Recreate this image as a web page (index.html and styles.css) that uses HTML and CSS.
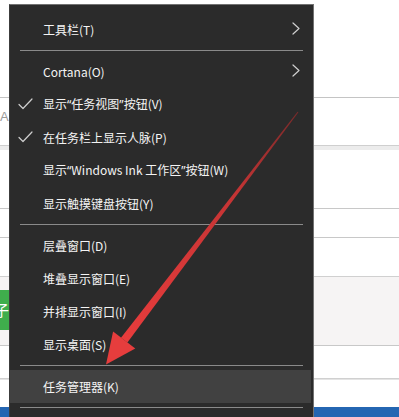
FILE: index.html
```html
<!DOCTYPE html>
<html lang="zh-CN">
<head>
<meta charset="utf-8">
<link rel="stylesheet" href="styles.css">
</head>
<body>
<div class="page">
  <div class="bg">
    <div class="row r1"></div>
    <div class="row r2"><span class="frag">A</span></div>
    <div class="row r3"></div>
    <div class="row r4"></div>
    <div class="row r5"></div>
    <div class="row r6"><div class="green">子</div></div>
    <div class="row r7"></div>
    <div class="row r8"></div>
    <div class="row r9"></div>
  </div>

  <div class="menu">
    <div class="item"><span class="ico"></span><span class="label">工具栏(T)</span><svg class="chev" width="8" height="13" viewBox="0 0 8 13"><path d="M1 1 L7 6.5 L1 12" /></svg></div>
    <div class="sep"></div>
    <div class="item"><span class="ico"></span><span class="label">Cortana(O)</span><svg class="chev" width="8" height="13" viewBox="0 0 8 13"><path d="M1 1 L7 6.5 L1 12" /></svg></div>
    <div class="item"><span class="ico"><svg class="check" width="15" height="12" viewBox="0 0 15 12"><path d="M1 6.5 L5 10.5 L14 1" /></svg></span><span class="label">显示<span class="q">“</span>任务视图<span class="q">”</span>按钮(V)</span></div>
    <div class="item"><span class="ico"><svg class="check" width="15" height="12" viewBox="0 0 15 12"><path d="M1 6.5 L5 10.5 L14 1" /></svg></span><span class="label">在任务栏上显示人脉(P)</span></div>
    <div class="item"><span class="ico"></span><span class="label">显示<span class="q">“</span>Windows Ink 工作区<span class="q">”</span>按钮(W)</span></div>
    <div class="item"><span class="ico"></span><span class="label">显示触摸键盘按钮(Y)</span></div>
    <div class="sep"></div>
    <div class="item"><span class="ico"></span><span class="label">层叠窗口(D)</span></div>
    <div class="item"><span class="ico"></span><span class="label">堆叠显示窗口(E)</span></div>
    <div class="item"><span class="ico"></span><span class="label">并排显示窗口(I)</span></div>
    <div class="item"><span class="ico"></span><span class="label">显示桌面(S)</span></div>
    <div class="sep"></div>
    <div class="item hot"><span class="ico"></span><span class="label">任务管理器(K)</span></div>
    <div class="sep"></div>
  </div>

  <svg class="arrow" width="399" height="417" viewBox="0 0 399 417">
    <defs>
      <linearGradient id="shaft" x1="298" y1="112" x2="124" y2="340" gradientUnits="userSpaceOnUse">
        <stop offset="0" stop-color="#7a2a2a"/>
        <stop offset="0.35" stop-color="#c43434"/>
        <stop offset="1" stop-color="#e83c3c"/>
      </linearGradient>
    </defs>
    <polygon points="121,337.7 297.6,111.7 298.4,112.3 127.4,342.5" fill="url(#shaft)"/>
    <polygon points="113.1,331.6 135.3,348.6 106,364.5" fill="#e63d3d"/>
  </svg>
</div>
</body>
</html>
```

FILE: styles.css
```css
* { box-sizing: border-box; }
html, body { margin: 0; padding: 0; }
body {
  width: 399px;
  height: 417px;
  overflow: hidden;
  background: #ffffff;
  font-family: "Noto Sans CJK SC", "Noto Sans", sans-serif;
}
.page {
  position: relative;
  width: 399px;
  height: 417px;
  overflow: hidden;
}
.bg {
  display: flex;
  flex-direction: column;
  width: 399px;
}
.row { width: 100%; border-bottom: 1px solid #c4c4c4; }
.r1 { height: 98px; }
.r2 { height: 48px; border-bottom-color: #cfcfcf; position: relative; }
.r3 { height: 63px; border-top: 4px solid #ececec; border-bottom-color: #c8c8c8; }
.r4 { height: 29px; border-bottom-color: #c8c8c8; }
.r5 { height: 39px; border-bottom-color: #d0d0d0; }
.r6 { height: 69px; background: #f6f4f4; border-bottom-color: #c8c8c8; padding-top: 13px; }
.r7 { height: 33px; border-bottom-color: #d0d0d0; }
.r8 { height: 28px; border-bottom: none; border-top: 1px solid #e4e4e4; }
.r9 { height: 40px; background: #2466b2; border-bottom: none; }
.frag {
  display: block;
  padding-top: 12px;
  font-size: 13px;
  line-height: 14px;
  color: #9a9a9a;
  font-family: "Liberation Sans", sans-serif;
}
.green {
  width: 12px;
  height: 40px;
  background: #3fae4c;
  color: #ffffff;
  font-size: 15px;
  line-height: 40px;
  overflow: hidden;
  text-indent: -6px;
}

.menu {
  position: absolute;
  left: 9px;
  top: 4px;
  width: 305px;
  height: 440px;
  background: #2b2b2b;
  border: 1px solid #727272;
  border-left-color: #3c3c3c;
  padding-top: 8px;
  display: flex;
  flex-direction: column;
}
.item {
  height: 33px;
  display: grid;
  grid-template-columns: 33px 1fr auto;
  align-items: center;
  padding-right: 11px;
  color: #f4f4f4;
  font-size: 12px;
  line-height: 16px;
  margin-right: 2px;
}
.item.hot { background: #414141; }
.ico { display: flex; align-items: center; padding-left: 8px; }
.check { margin-top: -2px; }
.check path, .chev path {
  fill: none;
  stroke: #cfcfcf;
  stroke-width: 1.2;
  stroke-linecap: round;
  stroke-linejoin: round;
}
.chev { margin-top: -2px; }
.label { white-space: nowrap; }
.q { font-family: "Noto Sans", "Liberation Sans", sans-serif; }
.sep {
  height: 9px;
  display: flex;
  align-items: center;
  padding: 0 10px;
}
.sep::before {
  content: "";
  display: block;
  width: 100%;
  height: 1px;
  background: #8a8a8a;
}
.arrow {
  position: absolute;
  left: 0;
  top: 0;
  pointer-events: none;
}
```
